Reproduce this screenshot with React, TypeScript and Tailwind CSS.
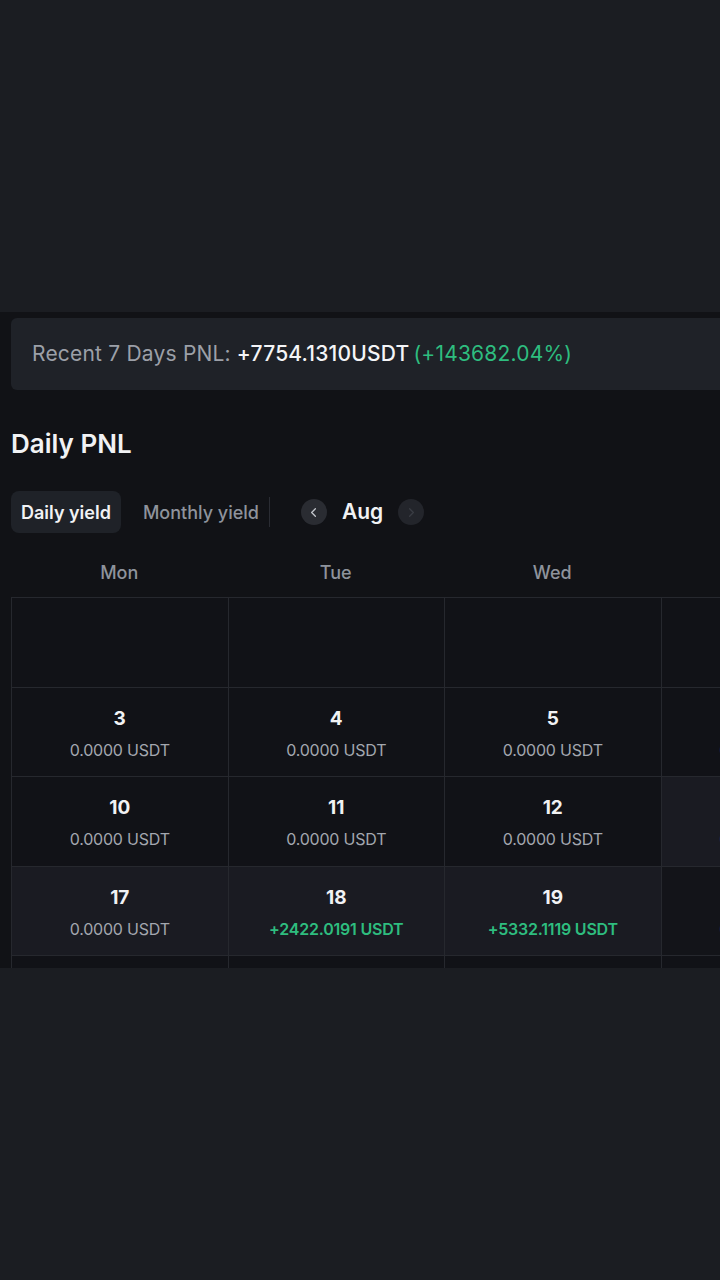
import { ChevronLeft, ChevronRight } from "lucide-react";

type Day = { day?: number; pnl?: string; up?: boolean; hl?: boolean; dim?: boolean };

const WEEKDAYS = ["Mon", "Tue", "Wed", "Thu", "Fri", "Sat", "Sun"];

// August calendar, Monday first
const ROWS: Day[][] = [
  [{}, {}, {}, {}, {}, { day: 1, pnl: "0.0000 USDT" }, { day: 2, pnl: "0.0000 USDT" }],
  [
    { day: 3, pnl: "0.0000 USDT" },
    { day: 4, pnl: "0.0000 USDT" },
    { day: 5, pnl: "0.0000 USDT" },
    { day: 6, pnl: "0.0000 USDT" },
    { day: 7, pnl: "0.0000 USDT" },
    { day: 8, pnl: "0.0000 USDT" },
    { day: 9, pnl: "0.0000 USDT" },
  ],
  [
    { day: 10, pnl: "0.0000 USDT" },
    { day: 11, pnl: "0.0000 USDT" },
    { day: 12, pnl: "0.0000 USDT" },
    { day: 13, pnl: "0.0000 USDT", hl: true },
    { day: 14, pnl: "0.0000 USDT", hl: true },
    { day: 15, pnl: "0.0000 USDT", hl: true },
    { day: 16, pnl: "0.0000 USDT", hl: true },
  ],
  [
    { day: 17, pnl: "0.0000 USDT", hl: true },
    { day: 18, pnl: "+2422.0191 USDT", up: true, hl: true },
    { day: 19, pnl: "+5332.1119 USDT", up: true, hl: true },
    { day: 20, pnl: "0.0000 USDT", dim: true },
    { day: 21, pnl: "0.0000 USDT" },
    { day: 22, pnl: "0.0000 USDT" },
    { day: 23, pnl: "0.0000 USDT" },
  ],
  [
    { day: 24, pnl: "0.0000 USDT" },
    { day: 25, pnl: "0.0000 USDT" },
    { day: 26, pnl: "0.0000 USDT" },
    { day: 27, pnl: "0.0000 USDT" },
    { day: 28, pnl: "0.0000 USDT" },
    { day: 29, pnl: "0.0000 USDT" },
    { day: 30, pnl: "0.0000 USDT" },
  ],
];

function Cell({ d }: { d: Day }) {
  const bg = d.hl ? "bg-[#1a1b22]" : d.dim ? "bg-[#131419]" : "bg-[#111217]";
  return (
    <div className={`h-[89.5px] border-r border-b border-[#26282e] ${bg} flex flex-col items-center pt-[18px]`}>
      {d.day !== undefined && (
        <>
          <span className="text-[19px] leading-[26px] font-bold text-[#f1f2f4]">{d.day}</span>
          <span
            className={`mt-[7px] text-[16px] leading-[22px] tracking-[-0.2px] ${
              d.up ? "text-[#2ebd7f] font-semibold" : "text-[#a3a7af]"
            }`}
          >
            {d.pnl}
          </span>
        </>
      )}
    </div>
  );
}

export default function App() {
  return (
    <div className="w-[720px] h-[1280px] bg-[#1b1d22] overflow-hidden font-['Inter',sans-serif]">
      <div className="h-[312px]" />

      <section className="h-[656px] bg-[#111216] overflow-hidden pt-[6px] pl-[11px]">
        <div className="w-[1530px]">
          {/* 7-day summary */}
          <div className="h-[72px] rounded-l-[6px] bg-[#1f2228] flex items-center pl-[21px] text-[21px] tracking-[0.2px]">
            <span className="text-[#9ca0a8]">Recent 7 Days PNL:</span>
            <span className="ml-[6px] text-[#f4f5f7] font-medium">+7754.1310USDT</span>
            <span className="ml-[4px] text-[#2ebd7f]">(+143682.04%)</span>
          </div>

          <h2 className="mt-[37px] text-[26px] leading-[34px] font-semibold text-[#f1f2f4]">Daily PNL</h2>

          {/* yield tabs + month switcher */}
          <div className="mt-[30px] flex items-center h-[42px]">
            <button className="h-[42px] px-[10px] rounded-[8px] bg-[#1f2228] text-[18px] font-semibold text-[#f1f2f4]">
              Daily yield
            </button>
            <button className="ml-[22px] text-[18px] font-medium text-[#8e939c]">Monthly yield</button>
            <div className="ml-[10px] w-px h-[30px] bg-[#2a2c33]" />
            <button className="ml-[31px] w-[26px] h-[26px] rounded-full bg-[#2a2c32] flex items-center justify-center text-[#c4c7cd]">
              <ChevronLeft size={15} strokeWidth={2} />
            </button>
            <span className="ml-[15px] text-[21px] font-semibold text-[#f1f2f4]">Aug</span>
            <button className="ml-[15px] w-[26px] h-[26px] rounded-full bg-[#23252b] flex items-center justify-center text-[#3a3d44]">
              <ChevronRight size={15} strokeWidth={2} />
            </button>
          </div>

          {/* weekday header */}
          <div className="mt-[27px] grid grid-cols-[repeat(7,216.5px)] h-[37px] items-start">
            {WEEKDAYS.map((w) => (
              <div key={w} className="text-center text-[18px] leading-[26px] font-medium text-[#8e939c]">
                {w}
              </div>
            ))}
          </div>

          {/* month grid */}
          <div className="grid grid-cols-[repeat(7,216.5px)] border-l border-t border-[#26282e]">
            {ROWS.flat().map((d, i) => (
              <Cell key={i} d={d} />
            ))}
          </div>
        </div>
      </section>
    </div>
  );
}
